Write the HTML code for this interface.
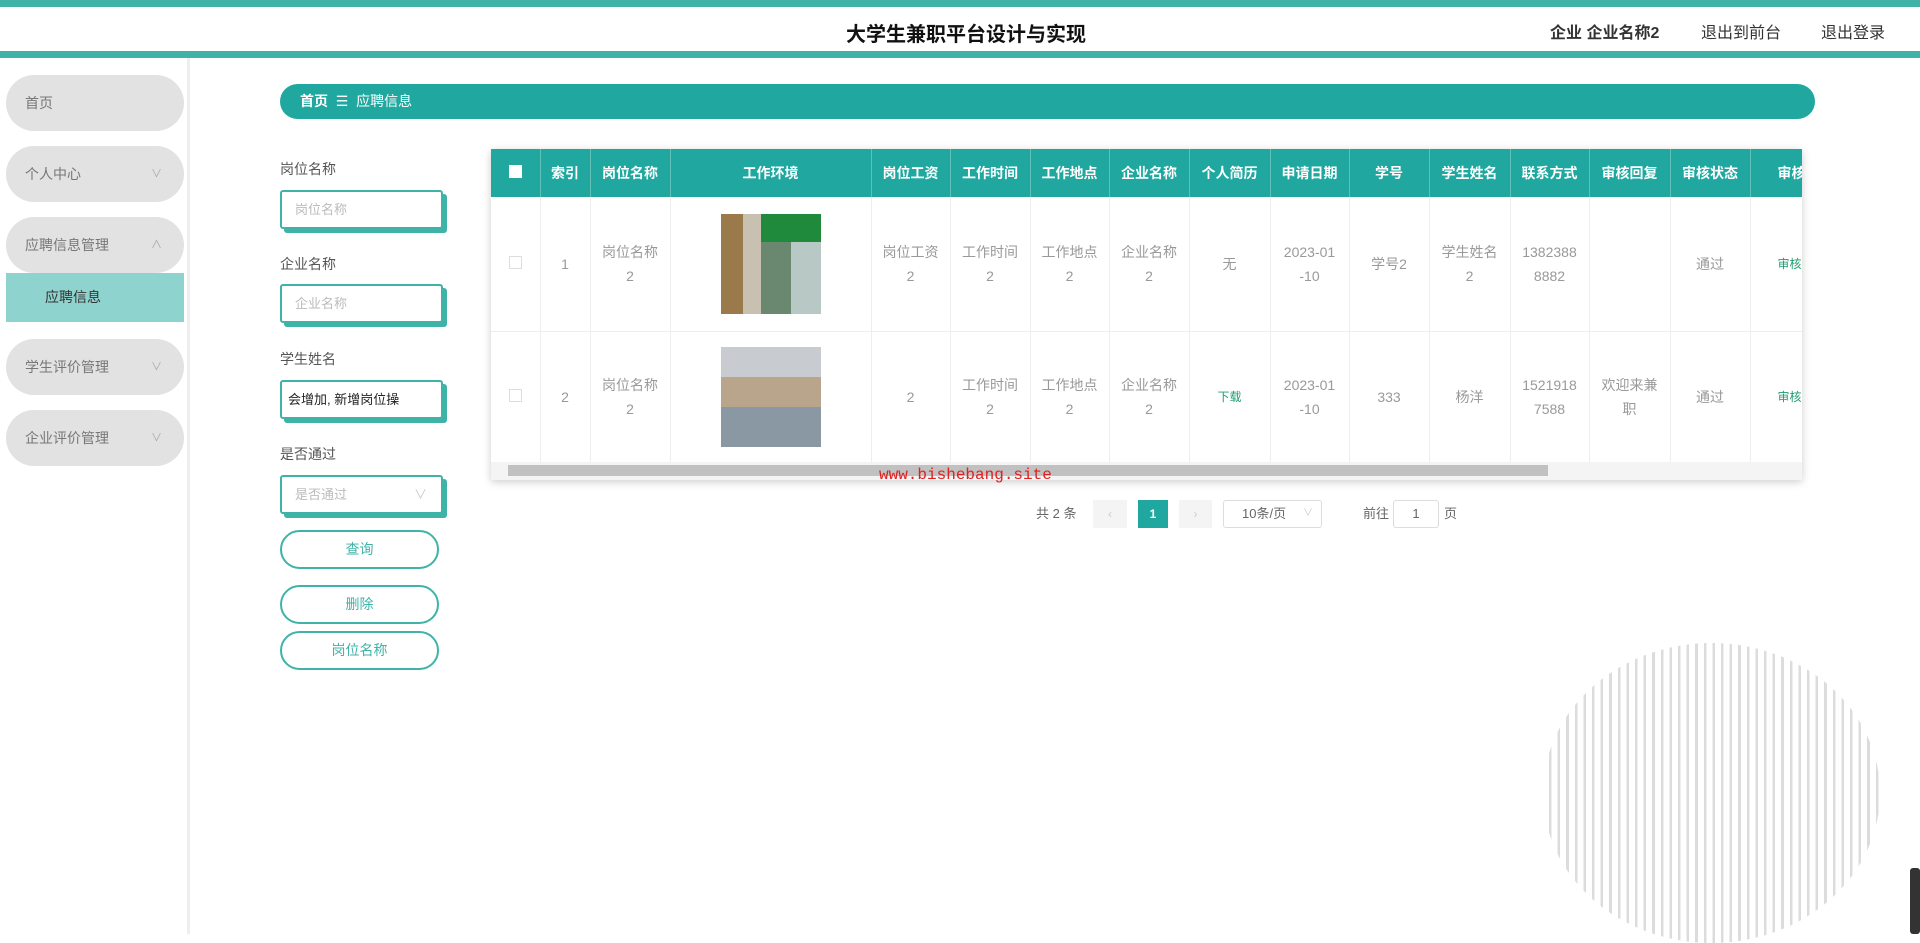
<!DOCTYPE html>
<html><head><meta charset="utf-8">
<style>
*{box-sizing:border-box;margin:0;padding:0}
body{width:1920px;height:934px;overflow:hidden;background:#fff;font-family:"Liberation Sans","Noto Sans CJK SC",sans-serif;position:relative;color:#333}
.abs{position:absolute}
.top{left:0;top:0;width:1920px;height:7px;background:#3fb3a8}
.hdr{left:0;top:7px;width:1920px;height:44px;background:#fff}
.line{left:0;top:51px;width:1920px;height:7px;background:#3fb3a8}
.title{left:0;width:1932px;top:18px;text-align:center;font-size:20px;font-weight:bold;color:#111}
.rt{top:19px;font-size:16px;color:#333}
.side{left:0;top:58px;width:190px;height:876px;background:#fff;border-right:3px solid #eee}
.pill{left:6px;width:178px;height:56px;border-radius:28px;background:#e2e2e2;font-size:14px;color:#777;padding-left:19px;line-height:56px}
.pill .ar{position:absolute;right:22px;top:0;font-size:11px;color:#aaa}
.sub{left:6px;top:273px;width:178px;height:49px;background:#8fd3cf;font-size:14px;color:#333;padding-left:39px;line-height:49px}
.bc{left:280px;top:84px;width:1535px;height:35px;border-radius:18px;background:#20a8a0;color:#fff;font-size:14px;line-height:35px;padding-left:20px}
.lbl{left:280px;font-size:14px;color:#555}
.inp{left:280px;width:163px;height:39px;border:2px solid #3fb3a8;border-radius:3px;box-shadow:4px 4px 0 #3fb3a8;font-size:13px;color:#bbb;line-height:35px;padding-left:13px;background:#fff}
.btn{left:280px;width:159px;height:39px;border:2px solid #3fb3a8;border-radius:20px;text-align:center;line-height:35px;font-size:14px;color:#3fb3a8;background:#fff}
.tbl{left:491px;top:149px;width:1311px;height:331px;box-shadow:0 2px 8px rgba(0,0,0,.2);overflow:hidden;background:#fff}
table{border-collapse:collapse;table-layout:fixed;position:absolute;left:0;top:0;width:1339px}
th{background:#20a8a0;color:#fff;font-size:14px;height:48px;border-right:1px solid #5fc0b8;font-weight:bold;white-space:nowrap;overflow:hidden}
td{border-right:1px solid #eee;border-bottom:1px solid #eee;text-align:center;color:#999;font-size:14px;line-height:24px;height:134px}
tr.r2 td{height:131px}
.cb{display:inline-block;width:13px;height:13px;border:1px solid #ddd;background:#fff}
.g{color:#20a070;font-size:12px}
.sb{left:0;top:313px;width:1311px;height:18px;background:#f4f4f4}
.thumb{left:17px;top:3px;width:1040px;height:11px;background:#c1c1c1}
.pg{top:500px;font-size:13px;color:#666;line-height:28px}
.pb{top:500px;height:28px;background:#f4f4f5;color:#ccc;text-align:center;line-height:28px;font-size:12px}
</style></head><body>
<div class="abs top"></div><div class="abs hdr"></div><div class="abs line"></div>
<div class="abs title">大学生兼职平台设计与实现</div>
<div class="abs rt" style="left:1550px;font-weight:bold">企业 企业名称2</div>
<div class="abs rt" style="left:1701px">退出到前台</div>
<div class="abs rt" style="left:1821px">退出登录</div>

<div class="abs side"></div>
<div class="abs pill" style="top:75px">首页</div>
<div class="abs pill" style="top:146px">个人中心<span class="ar">∨</span></div>
<div class="abs pill" style="top:217px">应聘信息管理<span class="ar">∧</span></div>
<div class="abs sub">应聘信息</div>
<div class="abs pill" style="top:339px">学生评价管理<span class="ar">∨</span></div>
<div class="abs pill" style="top:410px">企业评价管理<span class="ar">∨</span></div>

<div class="abs bc"><b>首页</b>&nbsp; ☰ &nbsp;应聘信息</div>

<div class="abs lbl" style="top:159px">岗位名称</div>
<div class="abs inp" style="top:190px">岗位名称</div>
<div class="abs lbl" style="top:254px">企业名称</div>
<div class="abs inp" style="top:284px">企业名称</div>
<div class="abs lbl" style="top:349px">学生姓名</div>
<div class="abs inp" style="top:380px;color:#222;padding-left:6px;overflow:hidden;white-space:nowrap">会增加, 新增岗位操</div>
<div class="abs lbl" style="top:444px">是否通过</div>
<div class="abs inp" style="top:475px">是否通过<span style="position:absolute;right:14px;color:#ccc">∨</span></div>
<div class="abs btn" style="top:530px">查询</div>
<div class="abs btn" style="top:585px">删除</div>
<div class="abs btn" style="top:631px">岗位名称</div>

<div class="abs tbl">
<table>
<colgroup><col style="width:49px"><col style="width:50px"><col style="width:80px"><col style="width:201px"><col style="width:79px"><col style="width:80px"><col style="width:79px"><col style="width:80px"><col style="width:81px"><col style="width:79px"><col style="width:80px"><col style="width:81px"><col style="width:79px"><col style="width:81px"><col style="width:80px"><col style="width:80px"></colgroup>
<tr><th><span class="cb" style="border:none"></span></th><th>索引</th><th>岗位名称</th><th>工作环境</th><th>岗位工资</th><th>工作时间</th><th>工作地点</th><th>企业名称</th><th>个人简历</th><th>申请日期</th><th>学号</th><th>学生姓名</th><th>联系方式</th><th>审核回复</th><th>审核状态</th><th style="text-align:left;padding-left:27px">审核</th></tr>
<tr><td><span class="cb"></span></td><td>1</td><td>岗位名称<br>2</td><td><div style="width:100px;height:100px;margin:auto;background:linear-gradient(90deg,#9a7a4a 0 22%,#c8c0b0 22% 40%,#6a8870 40% 70%,#b8c8c4 70%);position:relative"><div style="position:absolute;left:40%;top:0;width:60%;height:28%;background:#1f8a3c"></div></div></td><td>岗位工资<br>2</td><td>工作时间<br>2</td><td>工作地点<br>2</td><td>企业名称<br>2</td><td>无</td><td>2023-01<br>-10</td><td>学号2</td><td>学生姓名<br>2</td><td>1382388<br>8882</td><td></td><td>通过</td><td class="g" style="text-align:left;padding-left:27px">审核</td></tr>
<tr class="r2"><td><span class="cb"></span></td><td>2</td><td>岗位名称<br>2</td><td><div style="width:100px;height:100px;margin:auto;background:linear-gradient(180deg,#c8ccd0 0 30%,#b9a48c 30% 60%,#8a98a4 60%)"></div></td><td>2</td><td>工作时间<br>2</td><td>工作地点<br>2</td><td>企业名称<br>2</td><td class="g">下载</td><td>2023-01<br>-10</td><td>333</td><td>杨洋</td><td>1521918<br>7588</td><td>欢迎来兼<br>职</td><td>通过</td><td class="g" style="text-align:left;padding-left:27px">审核</td></tr>
</table>
<div class="abs sb"><div class="abs thumb"></div></div>
</div>
<div class="abs" style="left:879px;top:466px;font-family:'Liberation Mono',monospace;font-size:16px;color:#e02020">www.bishebang.site</div>

<div class="abs pg" style="left:1036px">共 2 条</div>
<div class="abs pb" style="left:1093px;width:34px">‹</div>
<div class="abs pb" style="left:1138px;width:30px;background:#20a8a0;color:#fff;font-weight:bold">1</div>
<div class="abs pb" style="left:1179px;width:33px">›</div>
<div class="abs" style="left:1223px;top:500px;width:99px;height:28px;border:1px solid #ddd;border-radius:3px;font-size:13px;color:#666;line-height:26px;padding-left:18px">10条/页<span style="position:absolute;right:8px;color:#ccc;font-size:10px">∨</span></div>
<div class="abs pg" style="left:1363px">前往</div>
<div class="abs" style="left:1393px;top:500px;width:46px;height:28px;border:1px solid #ddd;border-radius:3px;text-align:center;line-height:26px;font-size:13px;color:#666">1</div>
<div class="abs pg" style="left:1444px">页</div>

<div class="abs" style="left:1543px;top:643px;width:337px;height:300px;border-radius:50%;background:repeating-linear-gradient(90deg,#fff 0 6px,#dcdcdc 6px 8.6px)"></div>
<div class="abs" style="left:1910px;top:868px;width:10px;height:66px;background:#333;border-radius:3px"></div>
</body></html>
